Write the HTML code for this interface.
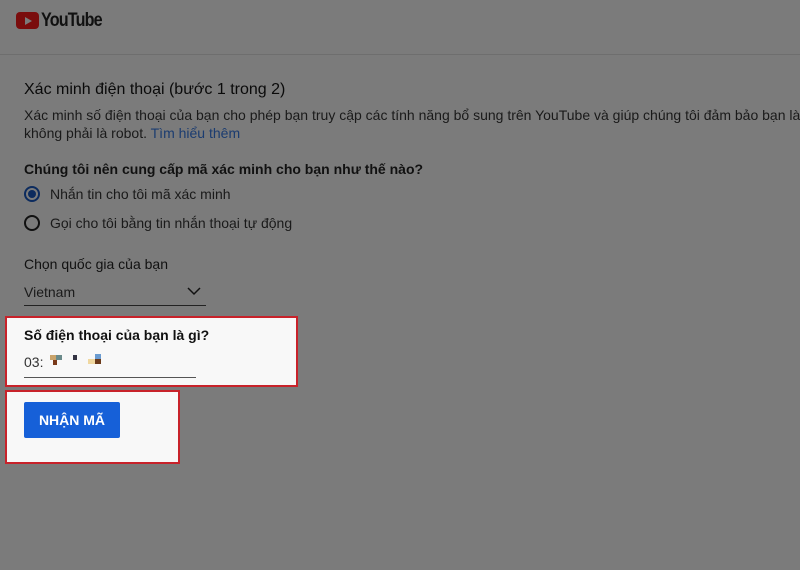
<!DOCTYPE html><html><head><style>
body{margin:0;width:800px;height:570px;background:#7b7b7b;font-family:"Liberation Sans",sans-serif;position:relative;overflow:hidden;color:#0a0a0a}
.a{position:absolute;white-space:nowrap}
</style></head><body>
<div class="a" style="left:16px;top:12px;width:23px;height:17px;background:#7a0d0d;border-radius:4px"></div>
<div class="a" style="left:25px;top:17px;width:0;height:0;border-left:7px solid #7b7b7b;border-top:4px solid transparent;border-bottom:4px solid transparent"></div>
<div class="a" style="left:41px;top:10px;font-size:19px;font-weight:bold;letter-spacing:-1px;transform:scaleX(0.85);transform-origin:left;color:#111">YouTube</div>
<div class="a" style="left:0;top:54px;width:800px;height:1px;background:#6e6e6e"></div>
<div class="a" style="left:24px;top:81px;font-size:16px">Xác minh điện thoại (bước 1 trong 2)</div>
<div class="a" style="left:24px;top:106px;font-size:14px;color:#1a1a1a;line-height:18px">Xác minh số điện thoại của bạn cho phép bạn truy cập các tính năng bổ sung trên YouTube và giúp chúng tôi đảm bảo bạn là người<br>không phải là robot. <span style="color:#1b3c70">Tìm hiểu thêm</span></div>
<div class="a" style="left:24px;top:161px;font-size:14px;font-weight:bold;color:#111">Chúng tôi nên cung cấp mã xác minh cho bạn như thế nào?</div>
<div class="a" style="left:24px;top:186px;width:12px;height:12px;border:2px solid #0c2b5e;border-radius:50%"></div>
<div class="a" style="left:28px;top:190px;width:8px;height:8px;background:#0c2b5e;border-radius:50%"></div>
<div class="a" style="left:50px;top:186px;font-size:14px;color:#1a1a1a">Nhắn tin cho tôi mã xác minh</div>
<div class="a" style="left:24px;top:215px;width:12px;height:12px;border:2px solid #111;border-radius:50%"></div>
<div class="a" style="left:50px;top:215px;font-size:14px;color:#1a1a1a">Gọi cho tôi bằng tin nhắn thoại tự động</div>
<div class="a" style="left:24px;top:256px;font-size:14px;color:#111">Chọn quốc gia của bạn</div>
<div class="a" style="left:24px;top:284px;font-size:14px;color:#1a1a1a">Vietnam</div>
<svg class="a" style="left:186px;top:286px" width="16" height="10"><path d="M2 2l6 6 6-6" stroke="#111" stroke-width="1.5" fill="none"/></svg>
<div class="a" style="left:24px;top:305px;width:182px;height:1px;background:#222"></div>
<div class="a" style="left:5px;top:316px;width:289px;height:67px;background:#f8f8f8;border:2px solid #c8222a"></div>
<div class="a" style="left:24px;top:327px;font-size:14px;font-weight:bold;color:#111">Số điện thoại của bạn là gì?</div>
<div class="a" style="left:24px;top:354px;font-size:14px;color:#333">03:</div>
<div class="a" style="left:50px;top:355px;width:6px;height:5px;background:#c9a36a"></div>
<div class="a" style="left:56px;top:355px;width:6px;height:5px;background:#6a8a8a"></div>
<div class="a" style="left:53px;top:360px;width:4px;height:5px;background:#7a3a1a"></div>
<div class="a" style="left:73px;top:355px;width:4px;height:5px;background:#334"></div>
<div class="a" style="left:88px;top:359px;width:7px;height:5px;background:#f0d8a0"></div>
<div class="a" style="left:95px;top:354px;width:6px;height:5px;background:#6a9bd0"></div>
<div class="a" style="left:95px;top:359px;width:6px;height:5px;background:#6b3a1a"></div>
<div class="a" style="left:24px;top:377px;width:172px;height:1px;background:#555"></div>
<div class="a" style="left:5px;top:390px;width:171px;height:70px;background:#f8f8f8;border:2px solid #c8222a"></div>
<div class="a" style="left:24px;top:402px;width:96px;height:36px;background:#1660d8;border-radius:2px;color:#fff;font-size:14px;font-weight:bold;text-align:center;line-height:36px">NHẬN MÃ</div>
</body></html>
